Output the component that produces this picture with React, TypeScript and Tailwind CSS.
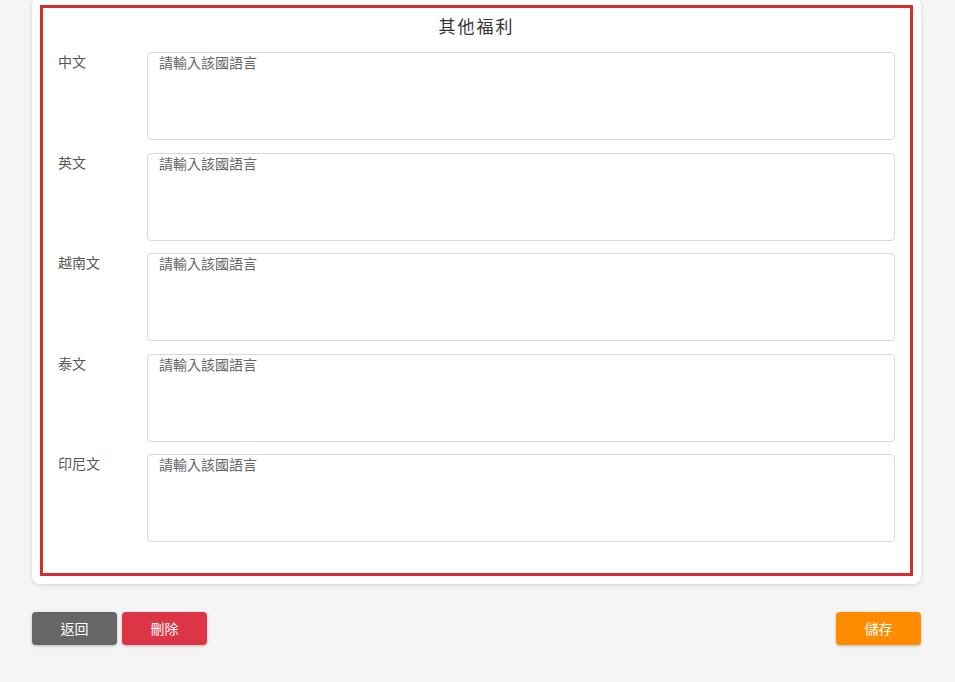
import React from "react";

const langs = ["中文", "英文", "越南文", "泰文", "印尼文"];

export default function App() {
  return (
    <div
      className="min-h-[682px] w-full bg-[#f5f5f5] pl-8 pr-[34px] overflow-hidden"
      style={{ fontFamily: '"Noto Sans CJK TC", "Noto Sans", sans-serif' }}
    >
      {/* 卡片 */}
      <div className="-mt-[3px] rounded-lg bg-white p-2 shadow-[0_1px_4px_rgba(0,0,0,0.15)]">
        <div className="border-[3px] border-[#d32f2f] px-[15px] pb-[31px]">
          <h2 className="pt-[6px] pb-[14px] text-center text-[17px] leading-[24px] tracking-[2px] text-[#333]">
            其他福利
          </h2>
          <div className="flex flex-col gap-[12.5px]">
            {langs.map((lang) => (
              <div key={lang} className="flex">
                <label className="w-[89px] shrink-0 -mt-[1px] text-[14px] leading-[20px] text-[#555]">
                  {lang}
                </label>
                <textarea
                  placeholder="請輸入該國語言"
                  className="h-[88px] flex-1 resize-none rounded-[4px] border border-[#d6d9dd] px-[11px] py-0 text-[14px] leading-[18px] text-[#333] placeholder:text-[#666] outline-none"
                />
              </div>
            ))}
          </div>
        </div>
      </div>

      {/* 按鈕列 */}
      <div className="mt-[28px] flex items-center">
        <button className="h-[33px] w-[85px] rounded-[4px] bg-[#666666] text-[14px] text-white shadow-[0_1px_3px_rgba(0,0,0,0.25)]">
          返回
        </button>
        <button className="ml-[5px] h-[33px] w-[85px] rounded-[4px] bg-[#dc3545] text-[14px] text-white shadow-[0_1px_3px_rgba(0,0,0,0.25)]">
          刪除
        </button>
        <div className="flex-1" />
        <button className="h-[33px] w-[85px] rounded-[4px] bg-[#ff8c00] text-[14px] text-white shadow-[0_1px_3px_rgba(0,0,0,0.25)]">
          儲存
        </button>
      </div>
    </div>
  );
}
